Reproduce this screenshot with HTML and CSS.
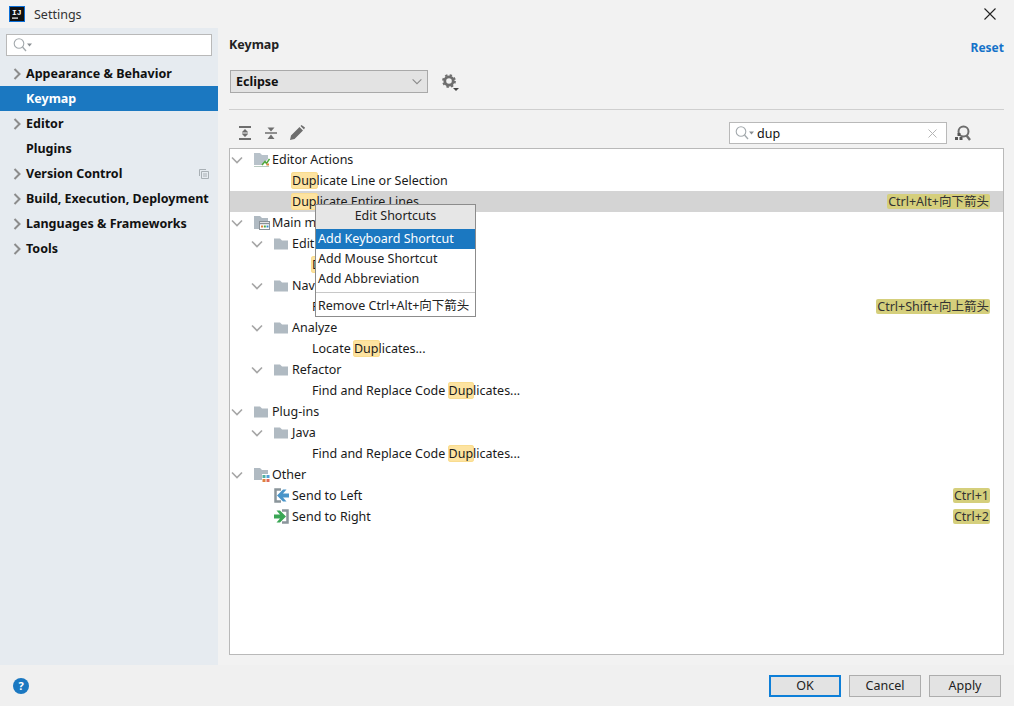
FILE: index.html
```html
<!DOCTYPE html>
<html lang="en">
<head>
  <meta charset="UTF-8">
  <title>Settings</title>
  <link rel="stylesheet" href="styles.css">
</head>
<body>
  <svg class="defs" width="0" height="0">
    <symbol id="chev-r" viewBox="0 0 8 12"><path d="M1.500 1 L6.500 6 L1.500 11" fill="none" stroke="#8c8c8c" stroke-width="2"/></symbol>
    <symbol id="chev-d" viewBox="0 0 12 8"><path d="M1 1.500 L6 6.500 L11 1.500" fill="none" stroke="#a6a6a6" stroke-width="1.600"/></symbol>
    <symbol id="folder" viewBox="0 0 14 12"><path d="M0 .5 H6 L8 2.500 H14 V11.500 H0 Z" fill="#b0bac2"/></symbol>
    <symbol id="search" viewBox="0 0 22 16"><circle cx="7" cy="6.500" r="4.800" fill="none" stroke="#a3a9ad" stroke-width="1.100"/><path d="M10.500 10 L14 14" stroke="#a3a9ad" stroke-width="1.300"/><path d="M15 6.500 H20 L17.500 9.500 Z" fill="#8a8f93"/></symbol>
  </svg>

  <div class="titlebar">
    <svg class="app-logo" width="16" height="16" viewBox="0 0 16 16">
      <rect width="16" height="16" fill="#0b6fd8"/>
      <rect x="1" y="1" width="14" height="14" fill="#111"/>
      <rect x="3" y="11.500" width="6" height="1.200" fill="#fff"/>
      <text x="3" y="9" class="app-logo-text">IJ</text>
    </svg>
    <span class="title">Settings</span>
    <svg class="close" width="12" height="12" viewBox="0 0 12 12"><path d="M.5 .5 L11.500 11.500 M11.500 .5 L.5 11.500" stroke="#222" stroke-width="1.100"/></svg>
  </div>

  <div class="body">
    <aside class="sidebar">
      <div class="side-search"><svg width="22" height="16"><use href="#search"/></svg></div>
      <ul class="side-list">
        <li class="side-item"><svg class="side-arrow" width="8" height="12"><use href="#chev-r"/></svg>Appearance &amp; Behavior</li>
        <li class="side-item selected">Keymap</li>
        <li class="side-item"><svg class="side-arrow" width="8" height="12"><use href="#chev-r"/></svg>Editor</li>
        <li class="side-item">Plugins</li>
        <li class="side-item"><svg class="side-arrow" width="8" height="12"><use href="#chev-r"/></svg>Version Control
          <svg class="side-copy" width="10" height="10" viewBox="0 0 10 10"><path d="M.5 7 V.5 H7 M2.500 2.500 H9.500 V9.500 H2.500 Z M4 5 H8 M4 7 H8" fill="none" stroke="#a9b0b5"/></svg>
        </li>
        <li class="side-item"><svg class="side-arrow" width="8" height="12"><use href="#chev-r"/></svg>Build, Execution, Deployment</li>
        <li class="side-item"><svg class="side-arrow" width="8" height="12"><use href="#chev-r"/></svg>Languages &amp; Frameworks</li>
        <li class="side-item"><svg class="side-arrow" width="8" height="12"><use href="#chev-r"/></svg>Tools</li>
      </ul>
    </aside>

    <main class="content">
      <div class="heading">
        <h1>Keymap</h1>
        <a class="reset">Reset</a>
      </div>

      <div class="scheme">
        <div class="combo">
          <span>Eclipse</span>
          <svg width="12" height="7" viewBox="0 0 12 8"><path d="M1 1.500 L6 6.500 L11 1.500" fill="none" stroke="#8a8a8a" stroke-width="1.200"/></svg>
        </div>
        <svg class="gear" width="17" height="17" viewBox="0 0 17 17">
          <circle cx="7" cy="7" r="4.200" fill="none" stroke="#6e6e6e" stroke-width="2.800"/>
          <circle cx="7" cy="7" r="6" fill="none" stroke="#6e6e6e" stroke-width="1.800" stroke-dasharray="2.400 2.310"/>
          <path d="M11 14 H17 L14 17 Z" fill="#444"/>
        </svg>
      </div>

      <div class="divider"></div>

      <div class="toolbar">
        <div class="tools">
          <svg width="14" height="14" viewBox="0 0 14 14"><path d="M1 1 H13 M1 13 H13" stroke="#6e6e6e" stroke-width="2"/><path d="M4 7 H10" stroke="#6e6e6e"/><path d="M7 3 L10 6 H4 Z M7 11 L4 8 H10 Z" fill="#6e6e6e"/></svg>
          <svg width="14" height="14" viewBox="0 0 14 14"><path d="M1 7 H13" stroke="#6e6e6e" stroke-width="1.500"/><path d="M7 5.500 L3.500 1.500 H10.500 Z M7 8.500 L10.500 13 H3.500 Z" fill="#6e6e6e"/></svg>
          <svg width="15" height="15" viewBox="0 0 15 15"><path d="M0 15 L1 10.500 L9.500 2 L13 5.500 L4.500 14 Z M10.500 1 L11.500 0 L15 2.500 L14 4.500 Z" fill="#6e6e6e"/></svg>
        </div>
        <div class="filter">
          <svg width="22" height="16"><use href="#search"/></svg>
          <span class="filter-text">dup</span>
          <svg class="filter-clear" width="9" height="9" viewBox="0 0 9 9"><path d="M.5 .5 L8.500 8.500 M8.500 .5 L.5 8.500" stroke="#b5b5b5"/></svg>
        </div>
        <svg class="find-shortcut" width="16" height="16" viewBox="0 0 16 16">
          <circle cx="8.500" cy="6.500" r="5" fill="none" stroke="#6e6e6e" stroke-width="2"/>
          <path d="M11.500 10.500 L15 15" stroke="#6e6e6e" stroke-width="2.400"/>
          <rect x="0" y="12" width="3" height="3" fill="#555"/><rect x="4.500" y="12" width="3" height="3" fill="#555"/><rect x="2.500" y="8" width="3" height="3" fill="#555"/>
        </svg>
      </div>

      <div class="tree">
        <div class="row">
          <svg class="arrow" width="12" height="8"><use href="#chev-d"/></svg>
          <svg class="icon" width="16" height="16" viewBox="0 0 16 16"><path d="M0 1 H6 L8 3 H14 V7 L8 13 H0 Z" fill="#b8c2ca"/><path d="M0 14.500 H15" stroke="#b8c9c0"/><path d="M8 13 L11 9.500 L12.500 11.500 L15.500 7" fill="none" stroke="#4fa83d" stroke-width="1.500"/><rect x="12.500" y="11.500" width="2.500" height="2" fill="#e0823d"/></svg>
          <span>Editor Actions</span>
        </div>
        <div class="row leaf-1"><span><mark>Dup</mark>licate Line or Selection</span></div>
        <div class="row leaf-1 current"><span><mark>Dup</mark>licate Entire Lines</span><kbd>Ctrl+Alt+向下箭头</kbd></div>
        <div class="row">
          <svg class="arrow" width="12" height="8"><use href="#chev-d"/></svg>
          <svg class="icon" width="16" height="16" viewBox="0 0 16 16"><path d="M0 1 H6 L8 3 H14 V6 H5 V14 H0 Z" fill="#b0bac2"/><rect x="5.500" y="6.500" width="10" height="8" fill="#fff" stroke="#8a9298"/><path d="M6 8.500 H15" stroke="#8a9298" stroke-width="1.500"/><rect x="7" y="10.500" width="2" height="2" fill="#e0823d"/><rect x="9.800" y="10.500" width="2" height="2" fill="#4fa83d"/><rect x="12.500" y="10.500" width="2" height="2" fill="#3b8ed0"/></svg>
          <span>Main menu</span>
        </div>
        <div class="row level-1">
          <svg class="arrow" width="12" height="8"><use href="#chev-d"/></svg>
          <svg class="folder" width="14" height="12"><use href="#folder"/></svg>
          <span>Edit</span>
        </div>
        <div class="row leaf-2"><span><mark>Dup</mark>licate Line or Selection</span></div>
        <div class="row level-1">
          <svg class="arrow" width="12" height="8"><use href="#chev-d"/></svg>
          <svg class="folder" width="14" height="12"><use href="#folder"/></svg>
          <span>Navigate</span>
        </div>
        <div class="row leaf-2"><span>Previous <mark>Dup</mark>licate</span><kbd>Ctrl+Shift+向上箭头</kbd></div>
        <div class="row level-1">
          <svg class="arrow" width="12" height="8"><use href="#chev-d"/></svg>
          <svg class="folder" width="14" height="12"><use href="#folder"/></svg>
          <span>Analyze</span>
        </div>
        <div class="row leaf-2"><span>Locate <mark>Dup</mark>licates...</span></div>
        <div class="row level-1">
          <svg class="arrow" width="12" height="8"><use href="#chev-d"/></svg>
          <svg class="folder" width="14" height="12"><use href="#folder"/></svg>
          <span>Refactor</span>
        </div>
        <div class="row leaf-2"><span>Find and Replace Code <mark>Dup</mark>licates...</span></div>
        <div class="row">
          <svg class="arrow" width="12" height="8"><use href="#chev-d"/></svg>
          <svg class="folder" width="14" height="12"><use href="#folder"/></svg>
          <span>Plug-ins</span>
        </div>
        <div class="row level-1">
          <svg class="arrow" width="12" height="8"><use href="#chev-d"/></svg>
          <svg class="folder" width="14" height="12"><use href="#folder"/></svg>
          <span>Java</span>
        </div>
        <div class="row leaf-2"><span>Find and Replace Code <mark>Dup</mark>licates...</span></div>
        <div class="row">
          <svg class="arrow" width="12" height="8"><use href="#chev-d"/></svg>
          <svg class="icon" width="16" height="16" viewBox="0 0 16 16"><path d="M0 1 H6 L8 3 H14 V7 H8 V13 H0 Z" fill="#b0bac2"/><rect x="8.500" y="8" width="3" height="3" fill="#4fb0a0"/><rect x="12.500" y="8" width="3" height="3" fill="#4f9fd8"/><rect x="8.500" y="12" width="3" height="3" fill="#e0823d"/><rect x="12.500" y="12" width="3" height="3" fill="#e06a5a"/></svg>
          <span>Other</span>
        </div>
        <div class="row level-1">
          <svg class="spacer" width="12" height="8"></svg>
          <svg class="wide" width="15" height="15" viewBox="0 0 15 15"><path d="M7 1.500 H1.500 V13.500 H7" fill="none" stroke="#8a959b" stroke-width="2.500"/><path d="M3 7.500 L9 1.500 H12.500 L9 5.500 H15 V9.500 H9 L12.500 13.500 H9 Z" fill="#4a95c9"/></svg>
          <span>Send to Left</span>
          <kbd>Ctrl+1</kbd>
        </div>
        <div class="row level-1">
          <svg class="spacer" width="12" height="8"></svg>
          <svg class="wide" width="15" height="15" viewBox="0 0 15 15"><path d="M8 1.500 H13.500 V13.500 H8" fill="none" stroke="#8a959b" stroke-width="2.500"/><path d="M12 7.500 L6 1.500 H2.500 L6 5.500 H0 V9.500 H6 L2.500 13.500 H6 Z" fill="#3aa655"/></svg>
          <span>Send to Right</span>
          <kbd>Ctrl+2</kbd>
        </div>

        <div class="popup">
          <div class="popup-title">Edit Shortcuts</div>
          <div class="popup-item active">Add Keyboard Shortcut</div>
          <div class="popup-item">Add Mouse Shortcut</div>
          <div class="popup-item">Add Abbreviation</div>
          <div class="popup-sep"></div>
          <div class="popup-item">Remove Ctrl+Alt+向下箭头</div>
        </div>
      </div>
    </main>
  </div>

  <footer class="footer">
    <span class="help">?</span>
    <div class="buttons">
      <button class="btn default">OK</button>
      <button class="btn">Cancel</button>
      <button class="btn">Apply</button>
    </div>
  </footer>
</body>
</html>
```

FILE: styles.css
```css
* {
  box-sizing: border-box;
}
html, body {
  height: 100%;
}
body {
  margin: 0;
  background: #f2f2f2;
  color: #1a1a1a;
  font-family: "Noto Sans", "Noto Sans CJK SC", sans-serif;
  font-size: 12.5px;
  display: flex;
  flex-direction: column;
  overflow: hidden;
}
.defs {
  position: absolute;
}

.titlebar {
  height: 28px;
  display: flex;
  align-items: center;
  padding: 0 18px 0 9px;
  flex: none;
}
.app-logo-text {
  font: bold 8px "Liberation Mono", monospace;
  fill: #fff;
}
.title {
  margin-left: 9px;
  color: #333;
}
.close {
  margin-left: auto;
}

.body {
  flex: 1;
  display: flex;
  min-height: 0;
}
.sidebar {
  width: 218px;
  background: #e6ebf0;
  padding-top: 6px;
  flex: none;
}
.side-search {
  margin: 0 6px;
  height: 22px;
  background: #fff;
  border: 1px solid #b9b9b9;
  padding: 2px 0 0 5px;
}
.side-list {
  list-style: none;
  margin: 5px 0 0;
  padding: 0;
}
.side-item {
  height: 25px;
  display: flex;
  align-items: center;
  padding-left: 26px;
  position: relative;
  font-weight: 700;
  color: #111;
}
.side-item.selected {
  background: #1b78c1;
  color: #fff;
}
.side-arrow {
  position: absolute;
  left: 13px;
  top: 7px;
}
.side-copy {
  position: absolute;
  left: 199px;
  top: 8px;
}

.content {
  flex: 1;
  padding: 0 10px 10px 11px;
  display: flex;
  flex-direction: column;
  min-width: 0;
}
.heading {
  display: flex;
  justify-content: space-between;
  height: 41px;
}
.heading h1 {
  margin: 8px 0 0;
  font-size: 12.5px;
  font-weight: 700;
  color: #222;
}
.reset {
  margin-top: 11px;
  font-weight: 700;
  font-size: 12px;
  color: #1572c9;
}
.scheme {
  display: flex;
  align-items: center;
  height: 24px;
  padding-left: 1px;
  margin-bottom: 16px;
}
.combo {
  width: 198px;
  height: 23px;
  background: #e3e3e3;
  border: 1px solid #a9a9a9;
  display: flex;
  align-items: center;
  justify-content: space-between;
  padding: 0 4px 0 5px;
  font-weight: 700;
  color: #111;
}
.gear {
  margin-left: 14px;
  margin-top: 3px;
  overflow: visible;
}
.divider {
  height: 1px;
  background: #cfcfcf;
  flex: none;
}
.toolbar {
  height: 38px;
  display: flex;
  align-items: flex-start;
  flex: none;
  padding: 12px 33px 0 0;
}
.tools {
  display: flex;
  gap: 12px;
  align-items: center;
  padding: 3px 0 0 9px;
}
.filter {
  margin-left: auto;
  margin-right: 8px;
  width: 218px;
  height: 22px;
  background: #fff;
  border: 1px solid #b9b9b9;
  display: flex;
  align-items: center;
  padding: 0 9px 0 4px;
}
.filter-text {
  margin-left: 1px;
  color: #111;
}
.filter-clear {
  margin-left: auto;
}
.find-shortcut {
  margin-top: 3px;
}

.tree {
  flex: 1;
  background: #fff;
  border: 1px solid #b9b9b9;
  position: relative;
}
.row {
  height: 21px;
  display: flex;
  align-items: center;
  padding-right: 13px;
  white-space: nowrap;
  color: #1a1a1a;
}
.row span {
  margin-top: -1px;
}
.row.current {
  background: #d4d4d4;
}
.level-1 {
  padding-left: 20px;
}
.leaf-1 {
  padding-left: 62px;
}
.leaf-2 {
  padding-left: 82px;
}
.arrow, .spacer {
  margin-left: 1px;
  margin-right: 11px;
  flex: none;
}
.icon {
  margin-right: 2px;
  flex: none;
}
.folder {
  margin-right: 4px;
  flex: none;
}
.wide {
  margin-right: 3px;
  flex: none;
}
mark {
  background: #fde3a0;
  border-radius: 3px;
  color: inherit;
  padding: 0 1px;
  margin: 0 -1px;
  box-shadow: 0 0 0 1px #f9dc8f inset;
}
kbd {
  margin-left: auto;
  font: inherit;
  background: #d5cf7c;
  border-radius: 2px;
  padding: 0 1px;
  line-height: 15px;
  color: #333;
}

.popup {
  position: absolute;
  left: 85px;
  top: 55px;
  width: 161px;
  height: 113px;
  background: #fff;
  border: 1px solid #8c8c8c;
}
.popup-title {
  height: 24px;
  background: #e6e6e6;
  text-align: center;
  line-height: 22px;
  color: #222;
}
.popup-item {
  height: 20px;
  line-height: 19px;
  padding-left: 2px;
  white-space: nowrap;
  color: #222;
}
.popup-item.active {
  background: #1b78c1;
  color: #fff;
}
.popup-sep {
  height: 1px;
  background: #c8c8c8;
  margin: 3px 0;
}

.footer {
  height: 41px;
  flex: none;
  background: #f0f0f0;
  display: flex;
  align-items: center;
  justify-content: space-between;
  padding: 0 13px;
}
.help {
  width: 16px;
  height: 16px;
  border-radius: 50%;
  background: #1b78c1;
  color: #fff;
  font-size: 11px;
  font-weight: 700;
  text-align: center;
  line-height: 16px;
}
.buttons {
  display: flex;
  gap: 8px;
}
.btn {
  width: 72px;
  height: 22px;
  padding: 0;
  background: #e3e3e3;
  border: 1px solid #adadad;
  font: inherit;
  color: #222;
}
.btn.default {
  border: 2px solid #0e7fd8;
}
```
